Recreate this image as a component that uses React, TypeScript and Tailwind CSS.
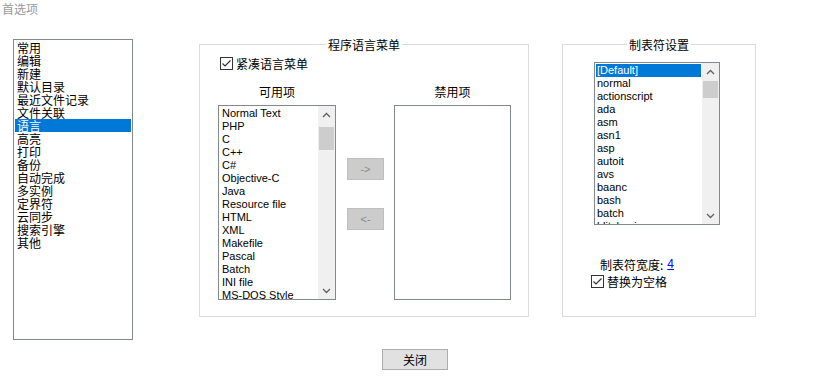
import React from 'react';

const cjk = '"Noto Sans CJK SC", "Liberation Sans", sans-serif';
const latin = '"Liberation Sans", "Noto Sans CJK SC", sans-serif';

const navItems = ['常用', '编辑', '新建', '默认目录', '最近文件记录', '文件关联', '语言', '高亮', '打印', '备份', '自动完成', '多实例', '定界符', '云同步', '搜索引擎', '其他'];
const langItems = ['Normal Text', 'PHP', 'C', 'C++', 'C#', 'Objective-C', 'Java', 'Resource file', 'HTML', 'XML', 'Makefile', 'Pascal', 'Batch', 'INI file', 'MS-DOS Style'];
const tabItems = ['[Default]', 'normal', 'actionscript', 'ada', 'asm', 'asn1', 'asp', 'autoit', 'avs', 'baanc', 'bash', 'batch', 'blitzbasic'];

function Chevron({ up }: { up?: boolean }) {
  return (
    <svg width="9" height="6" viewBox="0 0 9 6">
      <path d={up ? 'M1 5 L4.5 1.5 L8 5' : 'M1 1 L4.5 4.5 L8 1'} fill="none" stroke="#606060" strokeWidth="1.3" />
    </svg>
  );
}

function Scrollbar({ thumbTop, thumbH }: { thumbTop: number; thumbH: number }) {
  return (
    <div className="w-[17px] h-full bg-[#f0f0f0] flex flex-col shrink-0">
      <div className="h-[17px] flex items-center justify-center"><Chevron up /></div>
      <div className="bg-[#cdcdcd] mx-[1px]" style={{ marginTop: thumbTop, height: thumbH }} />
      <div className="mt-auto h-[17px] flex items-center justify-center"><Chevron /></div>
    </div>
  );
}

function Check() {
  return (
    <div className="w-[13px] h-[13px] border border-[#333] bg-white flex items-center justify-center shrink-0">
      <svg width="11" height="11" viewBox="0 0 11 11">
        <path d="M1.5 5.5 L4 8 L9.5 2.5" fill="none" stroke="#333" strokeWidth="1.2" />
      </svg>
    </div>
  );
}

function Group({ title, width, children }: { title: string; width: string; children: React.ReactNode }) {
  return (
    <div className={`relative mt-[5px] h-[273px] border border-[#dcdcdc] ${width}`}>
      <div className="absolute -top-[8px] left-0 right-0 flex justify-center">
        <span className="bg-white px-[2px] text-[12px] leading-[15px] text-black" style={{ fontFamily: cjk }}>{title}</span>
      </div>
      {children}
    </div>
  );
}

export default function App() {
  return (
    <div className="w-[839px] h-[380px] bg-white overflow-hidden text-black" style={{ fontFamily: cjk }}>
      <div className="h-[39px] pl-[2px] pt-[2px] text-[12px] leading-[14px] text-[#9a9a9a]">首选项</div>

      <div className="flex items-start">
        {/* nav list */}
        <div className="ml-[13px] w-[120px] h-[301px] border border-[#828790] pt-[1px] px-[1px]">
          {navItems.map((n) => (
            <div
              key={n}
              className={`h-[13px] leading-[13px] text-[12px] pl-[2px] ${n === '语言' ? 'bg-[#0078d7] text-white' : ''}`}
            >
              {n}
            </div>
          ))}
        </div>

        {/* language menu group */}
        <Group title="程序语言菜单" width="ml-[66px] w-[330px]">
          <div className="flex items-center gap-[3px] ml-[20px] mt-[12px] h-[13px] text-[12px] leading-[13px]">
            <Check />
            <span>紧凑语言菜单</span>
          </div>
          <div className="flex items-start ml-[18px] mt-[15px]">
            <div className="w-[118px]">
              <div className="h-[13px] leading-[13px] text-[12px] text-center">可用项</div>
              <div className="mt-[7px] h-[195px] border border-[#828790] flex overflow-hidden">
                <div className="flex-1 pt-[1px] pl-[3px] overflow-hidden text-[11px]" style={{ fontFamily: latin }}>
                  {langItems.map((l) => (
                    <div key={l} className="h-[13px] leading-[13px] whitespace-nowrap">{l}</div>
                  ))}
                </div>
                <Scrollbar thumbTop={4} thumbH={23} />
              </div>
            </div>
            <div className="ml-[11px] mt-[73px] flex flex-col gap-[28px]">
              <div className="w-[37px] h-[22px] bg-[#cccccc] border border-[#bfbfbf] flex items-center justify-center text-[11px] text-[#8a8a8a]" style={{ fontFamily: latin }}>-&gt;</div>
              <div className="w-[37px] h-[22px] bg-[#cccccc] border border-[#bfbfbf] flex items-center justify-center text-[11px] text-[#8a8a8a]" style={{ fontFamily: latin }}>&lt;-</div>
            </div>
            <div className="ml-[10px] w-[117px]">
              <div className="h-[13px] leading-[13px] text-[12px] text-center">禁用项</div>
              <div className="mt-[7px] h-[195px] border border-[#828790]" />
            </div>
          </div>
        </Group>

        {/* tab settings group */}
        <Group title="制表符设置" width="ml-[33px] w-[194px]">
          <div className="ml-[31px] mt-[17px] w-[126px] h-[163px] border border-[#828790] flex overflow-hidden">
            <div className="flex-1 pt-[1px] px-[1px] overflow-hidden text-[11px]" style={{ fontFamily: latin }}>
              {tabItems.map((t, i) => (
                <div
                  key={t}
                  className={`h-[13px] leading-[13px] pl-[1px] whitespace-nowrap ${i === 0 ? 'bg-[#0078d7] text-white' : ''}`}
                >
                  {t}
                </div>
              ))}
            </div>
            <Scrollbar thumbTop={1} thumbH={17} />
          </div>
          <div className="ml-[37px] mt-[33px] h-[13px] leading-[13px] text-[12px] flex items-center">
            <span>制表符宽度:</span>
            <span className="ml-[4px] text-[#0000ff] underline" style={{ fontFamily: latin }}>4</span>
          </div>
          <div className="ml-[28px] mt-[4px] flex items-center gap-[3px] h-[13px] text-[12px] leading-[13px]">
            <Check />
            <span>替换为空格</span>
          </div>
        </Group>
      </div>

      <button className="block ml-[382px] mt-[9px] w-[66px] h-[21px] bg-[#e1e1e1] border border-[#adadad] text-[12px] leading-[19px] text-black" style={{ fontFamily: cjk }}>
        关闭
      </button>
    </div>
  );
}
